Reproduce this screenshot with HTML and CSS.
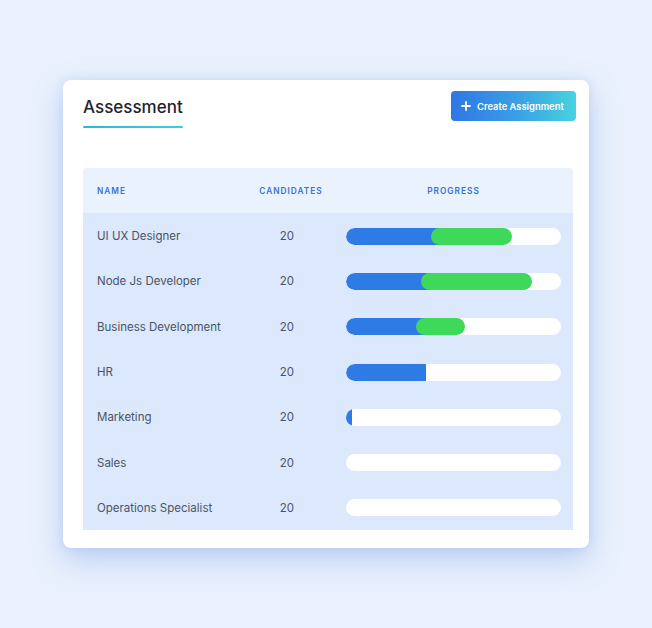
FILE: index.html
```html
<!DOCTYPE html>
<html>
<head>
<meta charset="utf-8">
<link rel="stylesheet" href="styles.css">
</head>
<body>
<div class="card">
  <div class="card-head">
    <div class="title-wrap">
      <h1 class="title">Assessment</h1>
      <div class="title-line"></div>
    </div>
    <button class="btn"><svg class="plus" viewBox="0 0 10 10" width="10" height="10"><path d="M5 1v8M1 5h8" stroke="#fff" stroke-width="1.8" stroke-linecap="round"/></svg>Create Assignment</button>
  </div>
  <div class="table">
    <div class="row head">
      <div class="c-name">NAME</div>
      <div class="c-cand">CANDIDATES</div>
      <div class="c-prog center">PROGRESS</div>
    </div>
    <div class="body">
      <div class="row">
        <div class="c-name">UI UX Designer</div>
        <div class="c-cand">20</div>
        <div class="c-prog"><div class="track"><div class="blue" style="width:94px"></div><div class="green" style="width:81px"></div></div></div>
      </div>
      <div class="row">
        <div class="c-name">Node Js Developer</div>
        <div class="c-cand">20</div>
        <div class="c-prog"><div class="track"><div class="blue" style="width:84px"></div><div class="green" style="width:111px"></div></div></div>
      </div>
      <div class="row">
        <div class="c-name">Business Development</div>
        <div class="c-cand">20</div>
        <div class="c-prog"><div class="track"><div class="blue" style="width:79px"></div><div class="green" style="width:49px"></div></div></div>
      </div>
      <div class="row">
        <div class="c-name">HR</div>
        <div class="c-cand">20</div>
        <div class="c-prog"><div class="track"><div class="blue" style="width:80px"></div></div></div>
      </div>
      <div class="row">
        <div class="c-name">Marketing</div>
        <div class="c-cand">20</div>
        <div class="c-prog"><div class="track"><div class="blue" style="width:6px"></div></div></div>
      </div>
      <div class="row">
        <div class="c-name">Sales</div>
        <div class="c-cand">20</div>
        <div class="c-prog"><div class="track"></div></div>
      </div>
      <div class="row">
        <div class="c-name">Operations Specialist</div>
        <div class="c-cand">20</div>
        <div class="c-prog"><div class="track"></div></div>
      </div>
    </div>
  </div>
</div>
</body>
</html>
```
FILE: styles.css
```css
html, body {
  margin: 0;
  padding: 0;
}
body {
  background: #eaf1fd;
  width: 652px;
  height: 628px;
  font-family: Inter, "Noto Sans", sans-serif;
  padding-top: 80px;
  box-sizing: border-box;
}
.card {
  margin-left: 63px;
  width: 526px;
  height: 468px;
  background: #fff;
  border-radius: 8px;
  box-shadow: 0 12px 30px rgba(110, 150, 225, 0.38), 0 0 10px rgba(140, 170, 230, 0.25);
  box-sizing: border-box;
  padding: 11px 13px 0 20px;
}
.card-head {
  display: flex;
  justify-content: space-between;
  align-items: flex-start;
  height: 77px;
}
.title-wrap {
  padding-top: 5px;
  width: 100px;
}
.title {
  margin: 0;
  font-size: 17px;
  font-weight: 500;
  color: #1f2430;
  line-height: 22px;
  white-space: nowrap;
}
.title-line {
  margin-top: 8px;
  height: 2px;
  width: 100px;
  background: linear-gradient(90deg, #2fb6d8, #3fcbe0);
  border-radius: 1px;
}
.btn {
  display: flex;
  align-items: center;
  gap: 6px;
  height: 30px;
  width: 125px;
  padding: 0 0 0 10px;
  border: none;
  border-radius: 4px;
  background: linear-gradient(90deg, #2f76e6 0%, #3aa2e4 55%, #47d3df 100%);
  color: #fff;
  font-family: Inter, sans-serif;
  font-size: 9.4px;
  font-weight: 600;
  box-sizing: border-box;
  white-space: nowrap;
}
.table {
  width: 490px;
  background: #dce8fb;
  border-radius: 4px 4px 0 0;
  overflow: hidden;
}
.row {
  display: grid;
  grid-template-columns: 150px 80px 234px;
  align-items: center;
  height: 45.3px;
  padding-left: 14px;
  font-size: 11.5px;
  color: #4b5466;
}
.body .row {
  padding-top: 1px;
  box-sizing: border-box;
}
.row.head {
  height: 45px;
  background: #eaf2fe;
  font-size: 8.3px;
  font-weight: 600;
  letter-spacing: 1px;
  color: #3a72d2;
}
.c-cand {
  text-align: center;
}
.row.head .c-cand {
  padding-left: 8px;
}
.c-prog {
  padding-left: 19px;
}
.c-prog.center {
  text-align: center;
}
.track {
  display: flex;
  width: 215px;
  height: 17px;
  background: #fff;
  border-radius: 9px;
  overflow: hidden;
}
.blue {
  height: 100%;
  background: #2f7be6;
  border-radius: 9px 0 0 9px;
}
.green {
  height: 100%;
  margin-left: -9px;
  background: #3ed85b;
  border-radius: 9px;
}
```
